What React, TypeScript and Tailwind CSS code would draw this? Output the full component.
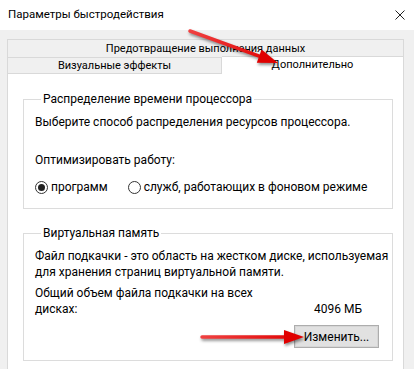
import { useState } from 'react';

const font = "font-['Roboto',_'Liberation_Sans',_sans-serif]";

function Radio({ checked, label }: { checked: boolean; label: string }) {
  return (
    <label className="flex items-center gap-[3px] whitespace-nowrap">
      <span className="flex h-[13px] w-[13px] items-center justify-center rounded-full border border-[#333333] bg-white">
        {checked ? <span className="h-[7px] w-[7px] rounded-full bg-[#222222]" /> : null}
      </span>
      <span>{label}</span>
    </label>
  );
}

function GroupBox({ title, className, children }: { title: string; className?: string; children: React.ReactNode }) {
  return (
    <fieldset className={`ml-[15px] mr-[10px] border border-[#dcdcdc] pl-[11px] ${className ?? ''}`}>
      <legend className="ml-[6px] px-[2px] leading-[16px]">{title}</legend>
      {children}
    </fieldset>
  );
}

function Arrow({ id, x1, y1, x2, y2 }: { id: string; x1: number; y1: number; x2: number; y2: number }) {
  const a = Math.atan2(y2 - y1, x2 - x1);
  const len = 20;
  const w = 7;
  const bx = x2 - Math.cos(a) * len;
  const by = y2 - Math.sin(a) * len;
  const px = -Math.sin(a) * w;
  const py = Math.cos(a) * w;
  return (
    <svg className="pointer-events-none absolute left-0 top-0 drop-shadow-[1px_2px_1.5px_rgba(0,0,0,0.45)]" width="414" height="369">
      <defs>
        <linearGradient id={id} x1={x1} y1={y1} x2={x2} y2={y2} gradientUnits="userSpaceOnUse">
          <stop offset="0" stopColor="#f04040" />
          <stop offset="1" stopColor="#e00000" />
        </linearGradient>
      </defs>
      <line x1={x1} y1={y1} x2={bx} y2={by} stroke={`url(#${id})`} strokeWidth="3.5" strokeLinecap="round" />
      <polygon points={`${x2},${y2} ${bx + px},${by + py} ${bx - px},${by - py}`} fill="#e00000" />
    </svg>
  );
}

export default function App() {
  const [mode] = useState<'apps' | 'services'>('apps');

  return (
    <div className={`relative h-[369px] w-[414px] overflow-hidden bg-[#f0f0f0] text-[12px] text-black ${font}`}>
      <div className="flex h-[30px] items-center justify-between bg-white pl-[8px] pr-[8px]">
        <span className="text-[11.5px]">Параметры быстродействия</span>
        <svg width="10" height="10" viewBox="0 0 10 10" className="mr-[1px]">
          <path d="M0.5 0.5 L9.5 9.5 M9.5 0.5 L0.5 9.5" stroke="#222" strokeWidth="1" />
        </svg>
      </div>

      <div className="px-[7px] pt-[9px] pr-[10px]">
        <div className="flex h-[18px] items-center justify-center whitespace-nowrap border border-b-0 border-[#d9d9d9] bg-[#f0f0f0] text-[11px] leading-none">
          Предотвращение выполнения данных
        </div>
        <div className="flex h-[17px] text-[11px]">
          <div className="flex w-[215px] items-center justify-center whitespace-nowrap border border-[#d9d9d9] bg-[#f0f0f0] leading-none">
            Визуальные эффекты
          </div>
          <div className="-mt-[1px] flex h-[18px] flex-1 items-center justify-center whitespace-nowrap border border-b-0 border-l-0 border-[#d9d9d9] bg-white pb-[3px] leading-none">
            Дополнительно
          </div>
        </div>

        <div className="h-[300px] border border-t-0 border-[#d9d9d9] bg-white pt-[17px]">
          <GroupBox title="Распределение времени процессора" className="pb-[13px]">
            <div className="mt-[7px] whitespace-nowrap leading-[16px]">Выберите способ распределения ресурсов процессора.</div>
            <div className="mt-[22px] whitespace-nowrap leading-[16px]">Оптимизировать работу:</div>
            <div className="mt-[11px] flex gap-[20px] leading-[16px]">
              <Radio checked={mode === 'apps'} label="программ" />
              <Radio checked={mode === 'services'} label="служб, работающих в фоновом режиме" />
            </div>
          </GroupBox>

          <GroupBox title="Виртуальная память" className="mt-[16px] pb-[12px]">
            <div className="mt-[7px] whitespace-nowrap leading-[16px]">
              Файл подкачки - это область на жестком диске, используемая
              <br />
              для хранения страниц виртуальной памяти.
            </div>
            <div className="mt-[5px] flex items-end justify-between whitespace-nowrap pr-[30px] leading-[16px]">
              <div>
                Общий объем файла подкачки на всех
                <br />
                дисках:
              </div>
              <div>4096 МБ</div>
            </div>
            <div className="mt-[8px] flex justify-end pr-[13px]">
              <button
                type="button"
                className="h-[23px] w-[85px] border border-[#adadad] bg-[#e1e1e1] leading-none shadow-[inset_0_0_0_1px_#d6d6d6]"
              >
                Изменить...
              </button>
            </div>
          </GroupBox>
        </div>
      </div>

      <Arrow id="a1" x1={190} y1={31} x2={278} y2={63} />
      <Arrow id="a2" x1={202} y1={337} x2={304} y2={337} />
    </div>
  );
}
